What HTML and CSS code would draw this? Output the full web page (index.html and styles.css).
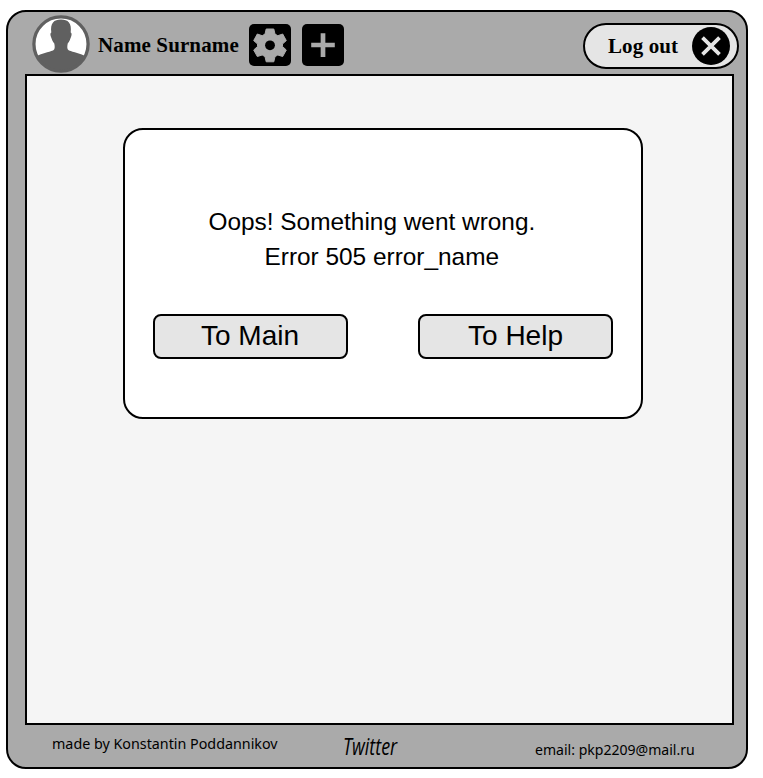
FILE: index.html
```html
<!DOCTYPE html>
<html lang="en">
<head>
<meta charset="utf-8">
<title>Error 505</title>
<link rel="stylesheet" href="styles.css">
</head>
<body>
<div class="frame">
  <header class="header">
    <svg class="avatar" viewBox="0 0 58 58">
      <circle cx="29" cy="29" r="27.2" fill="#fff"/>
      <path d="M4 41.5C9 38.5 17 37 21 35.5C23 34.5 23 32 22.3 28.5C20.5 26.5 20 24.500 19 22C18 19.500 18.300 18 19.300 17.500C18 8 22 4.500 29 4.500S40 8 38.700 17.500C39.700 18 40 19.500 39 22C38 24.500 37.500 26.500 35.700 28.500C35 32 35 34.500 37 35.500C41 37 49 38.500 54 41.500C49 51 40 56 29 56S9 51 4 41.500Z" fill="#606060"/>
      <circle cx="29" cy="29" r="27.1" fill="none" stroke="#606060" stroke-width="3.300"/>
    </svg>
    <span class="user-name">Name Surname</span>
    <button class="icon-button" aria-label="Settings">
      <svg viewBox="0 0 42 42">
        <path d="M17.200 5H24.800L26 10.100L28.800 11.700L33.700 10L37.300 16.600L33.500 20V22.500L37.300 26L33.700 32.500L28.800 31L26 32.600L24.800 37.800H17.200L16 32.600L13.200 31L8.300 32.500L4.700 26L8.500 22.500V20L4.700 16.600L8.300 10L13.200 11.700L16 10.100Z" fill="#aaa" stroke="#aaa" stroke-width="1" stroke-linejoin="round"/>
        <circle cx="21" cy="21.300" r="4.900"/>
      </svg>
    </button>
    <button class="icon-button add" aria-label="Add">
      <svg viewBox="0 0 42 42"><path d="M9.200 21H32.800M21 9.200V33" stroke="#aaa" stroke-width="4.700"/></svg>
    </button>
    <button class="logout">
      <span class="logout-text">Log out</span>
      <svg class="close" viewBox="0 0 38 38">
        <circle cx="19" cy="19" r="19"/>
        <path d="M10.500 10.700L27.500 27.300M27.500 10.700L10.500 27.300" stroke="#e5e5e5" stroke-width="3.800"/>
      </svg>
    </button>
  </header>
  <main class="panel">
    <section class="card">
      <p class="message first">Oops! Something went wrong.</p>
      <p class="message second">Error 505 error_name</p>
      <div class="actions">
        <button class="action">To Main</button>
        <button class="action help">To Help</button>
      </div>
    </section>
  </main>
  <footer class="footer">
    <span class="credit">made by Konstantin Poddannikov</span>
    <span class="brand">Twitter</span>
    <span class="email">email: pkp2209@mail.ru</span>
  </footer>
</div>
</body>
</html>
```
FILE: styles.css
```css
* { box-sizing: border-box; }
body { margin: 0; background: #fff; color: #000; }
button { margin: 0; padding: 0; color: #000; }
.frame {
  width: 742px; height: 759px; margin: 10px 0 0 6px;
  padding: 0 12px 0 17px;
  background: #aaa; border: 2px solid #000; border-radius: 20px;
  overflow: hidden;
}
.header { display: flex; height: 62px; padding-left: 6px; margin-right: -5px; }
.avatar { width: 58px; height: 58px; margin: 3px -1px 0 1px; flex: none; }
.user-name {
  width: 141px; margin: 20px 0 0 9px; flex: none;
  font: bold 21px/26px "Liberation Serif", serif; letter-spacing: .12px; white-space: nowrap;
}
.icon-button {
  width: 42px; height: 42px; margin: 12px 0 0 10px; flex: none;
  background: #000; border: 0; border-radius: 5px;
}
.icon-button.add { margin-left: 10.5px; }
.icon-button svg { display: block; width: 42px; height: 42px; }
.logout {
  display: flex; width: 156px; height: 46px; margin: 11px 0 0 auto; padding-left: 23px;
  background: #e5e5e5; border: 2px solid #000; border-radius: 23px;
}
.logout-text {
  width: 84px; margin-top: 8px; text-align: left;
  font: bold 21px/26px "Liberation Serif", serif; letter-spacing: .1px; white-space: nowrap;
}
.close { width: 38px; height: 38px; margin-top: 2px; }
.panel {
  width: 709px; height: 651px; padding: 52px 0 0 96px;
  background: #f5f5f5; border: 2px solid #000;
}
.card {
  width: 520px; height: 291px; padding: 74px 28px 0;
  background: #fff; border: 2px solid #000; border-radius: 20px;
}
.message { margin: 0; font: 24.4px/35px "Liberation Sans", sans-serif; white-space: nowrap; }
.first { padding-left: 55.5px; }
.second { padding-left: 111.5px; }
.actions { display: flex; justify-content: space-between; margin: 40px 0 0 -.5px; }
.action {
  width: 195px; height: 45px; padding-bottom: 1px;
  font: 28px/32px "Liberation Sans", sans-serif;
  background: #e5e5e5; border: 2px solid #000; border-radius: 8px;
}
.footer { display: flex; height: 42px; padding-left: 27px; white-space: nowrap; }
.credit, .email { font: 15px/20px "Noto Sans", sans-serif; transform: scaleX(.953); transform-origin: left; }
.credit { width: 291px; margin-top: 8px; }
.brand {
  width: 192px; margin-top: 8px;
  font: italic 500 23px/26px "Open Sans", sans-serif; transform: scaleX(.78); transform-origin: left;
}
.email { margin-top: 14px; transform: scaleX(.937); }
```
